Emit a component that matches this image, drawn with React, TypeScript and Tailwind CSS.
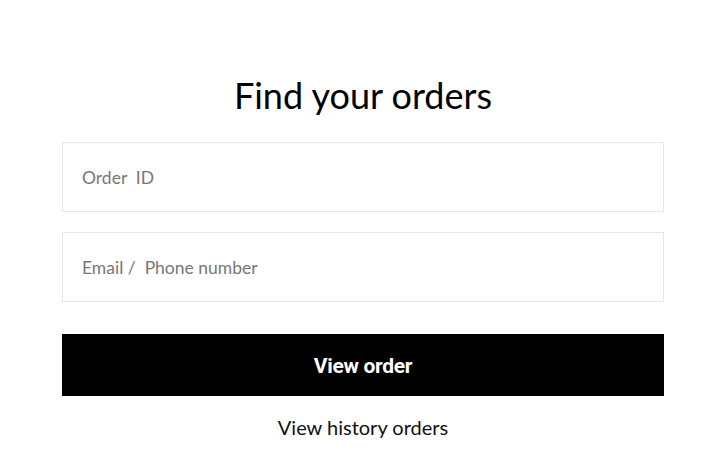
export default function App() {
  return (
    <div className="min-h-[462px] bg-white" style={{ fontFamily: 'Lato, "Open Sans", sans-serif' }}>
      <div className="ml-[62px] flex w-[602px] flex-col pt-[71px]">
        <h1 className="text-center text-[36px] leading-[48px] font-normal text-black">Find your orders</h1>
        <input
          className="mt-[23px] h-[70px] w-full border border-[#e6e6e6] px-[19px] text-[17.5px] text-black outline-none placeholder:text-[#777]"
          placeholder="Order  ID"
        />
        <input
          className="mt-[20px] h-[70px] w-full border border-[#e6e6e6] px-[19px] text-[17.5px] text-black outline-none placeholder:text-[#777]"
          placeholder="Email /  Phone number"
        />
        <button
          className="mt-[32px] h-[62px] w-full bg-black pt-[3px] text-[21px] font-bold tracking-[-0.3px] text-white"
          style={{ fontFamily: 'Roboto, sans-serif' }}
        >
          View order
        </button>
        <button className="mt-[15px] text-center text-[20px] leading-[32px] text-[#111]">View history orders</button>
      </div>
    </div>
  );
}
